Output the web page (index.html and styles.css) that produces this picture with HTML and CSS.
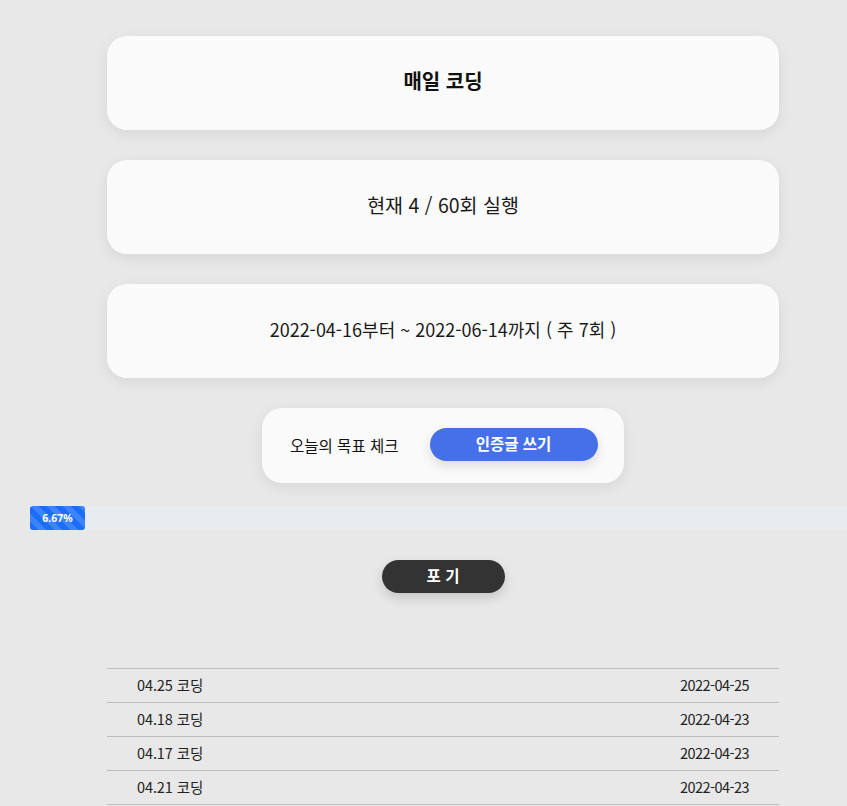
FILE: index.html
```html
<!DOCTYPE html>
<html lang="ko">
<head>
<meta charset="utf-8">
<link rel="stylesheet" href="styles.css">
</head>
<body>
<main class="page">
  <section class="wrap">
    <div class="card card-title">매일 코딩</div>
    <div class="card card-count">현재 4 / 60회 실행</div>
    <div class="card card-period">2022-04-16부터 ~ 2022-06-14까지 ( 주 7회 )</div>
    <div class="goal">
      <span class="goal-text">오늘의 목표 체크</span>
      <button class="btn-write">인증글 쓰기</button>
    </div>
  </section>
  <div class="progress">
    <div class="progress-bar" style="width:55px">6.67%</div>
  </div>
  <div class="giveup-row"><button class="btn-giveup">포 기</button></div>
  <ul class="list">
    <li class="row"><span class="label">04.25 코딩</span><span class="date">2022-04-25</span></li>
    <li class="row"><span class="label">04.18 코딩</span><span class="date">2022-04-23</span></li>
    <li class="row"><span class="label">04.17 코딩</span><span class="date">2022-04-23</span></li>
    <li class="row"><span class="label">04.21 코딩</span><span class="date">2022-04-23</span></li>
  </ul>
</main>
</body>
</html>
```

FILE: styles.css
```css
html, body {
  margin: 0;
  padding: 0;
  background: #e8e8e8;
  font-family: "Noto Sans CJK KR", "Noto Sans", sans-serif;
  color: #1a1a1a;
  overflow: hidden;
}
.page {
  padding-top: 36px;
}
.wrap {
  width: 672px;
  margin-left: 107px;
  display: flex;
  flex-direction: column;
  align-items: center;
  gap: 30px;
}
.card {
  width: 100%;
  height: 94px;
  box-sizing: border-box;
  padding-bottom: 5px;
  background: #fafafa;
  border-radius: 20px;
  box-shadow: 0 4px 14px rgba(0,0,0,0.08);
  display: flex;
  align-items: center;
  justify-content: center;
}
.card-title {
  font-size: 20px;
  font-weight: 700;
  color: #111;
}
.card-count {
  font-size: 19.5px;
}
.card-period {
  font-size: 18px;
}
.goal {
  width: 362px;
  height: 75px;
  box-sizing: border-box;
  background: #fafafa;
  border-radius: 20px;
  box-shadow: 0 4px 14px rgba(0,0,0,0.08);
  display: flex;
  align-items: center;
  padding-left: 28px;
  padding-bottom: 2px;
  gap: 31px;
}
.goal-text {
  font-size: 15.5px;
  color: #111;
}
.btn-write {
  width: 168px;
  height: 33px;
  border: none;
  border-radius: 17px;
  background: #4670e8;
  color: #fff;
  font-family: inherit;
  font-size: 15.5px;
  font-weight: 700;
  box-shadow: 0 5px 12px rgba(0,0,0,0.12);
  padding: 0 0 3px;
}
.progress {
  margin: 23px 0 0 30px;
  height: 24px;
  background: #e9ecef;
  display: flex;
}
.progress-bar {
  height: 24px;
  border-radius: 3px;
  background-color: #1a6ef8;
  background-image: linear-gradient(45deg, rgba(255,255,255,.15) 25%, transparent 25%, transparent 50%, rgba(255,255,255,.15) 50%, rgba(255,255,255,.15) 75%, transparent 75%, transparent);
  background-size: 16px 16px;
  color: #fff;
  font-size: 10.5px;
  font-weight: 700;
  display: flex;
  align-items: center;
  justify-content: center;
  font-family: "Noto Sans", sans-serif;
}
.giveup-row {
  width: 672px;
  margin-left: 107px;
  margin-top: 30px;
  display: flex;
  justify-content: center;
}
.btn-giveup {
  width: 123px;
  height: 33px;
  border: none;
  border-radius: 17px;
  background: #333;
  color: #fff;
  font-family: inherit;
  font-size: 15.5px;
  font-weight: 700;
  box-shadow: 0 5px 12px rgba(0,0,0,0.15);
  padding: 0 0 3px;
}
.list {
  list-style: none;
  margin: 75px 0 0 107px;
  padding: 0;
  width: 672px;
  border-top: 1px solid #bdbdbd;
}
.row {
  height: 33px;
  box-sizing: content-box;
  border-bottom: 1px solid #bdbdbd;
  display: flex;
  align-items: center;
  justify-content: space-between;
  padding: 0 30px;
  font-size: 14.5px;
  color: #222;
}
.row span {
  margin-bottom: 3px;
}
.label {
  letter-spacing: -0.1px;
}
.date {
  letter-spacing: -0.55px;
}
```
